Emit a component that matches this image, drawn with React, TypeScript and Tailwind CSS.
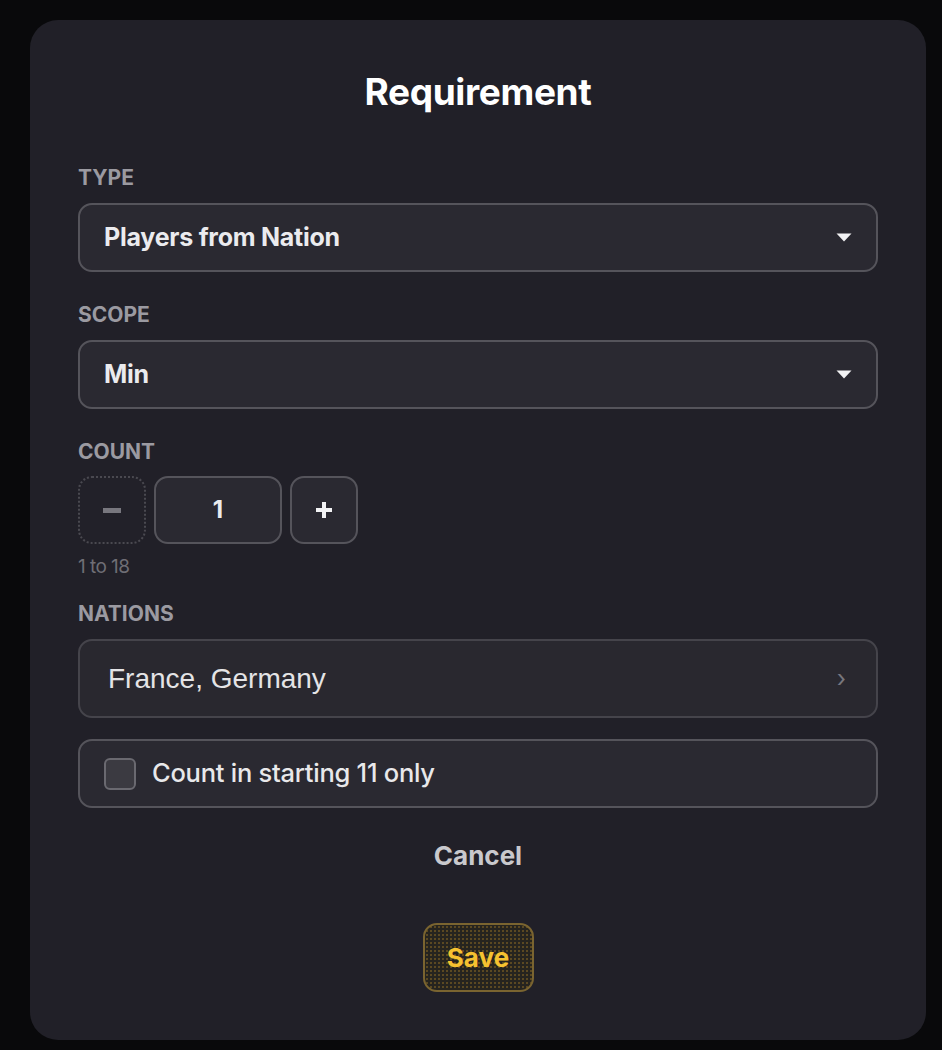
import { useState } from "react";

const font = { fontFamily: "Inter, 'Noto Sans', sans-serif" };

function FieldLabel({ children }: { children: React.ReactNode }) {
  return (
    <div className="text-[21px] font-bold leading-[26px] text-[#9b9aa1]">{children}</div>
  );
}

function Caret() {
  return (
    <svg width="16" height="9" viewBox="0 0 16 9" aria-hidden>
      <path d="M0.5 0.5h15L8 8.5z" fill="#f2f2f4" />
    </svg>
  );
}

function SelectBox({ value }: { value: string }) {
  return (
    <div className="flex h-[69px] items-center justify-between rounded-[14px] border-2 border-[#55545b] bg-[#2a2931] pl-[24px] pr-[24px]">
      <span className="text-[25px] font-bold tracking-[-0.01em] text-[#ebebee]">{value}</span>
      <Caret />
    </div>
  );
}

export default function App() {
  const [count] = useState(1);
  const [startingOnly, setStartingOnly] = useState(false);

  return (
    <div className="min-h-[1050px] bg-[#09090b] px-[30px] pt-[20px] pb-[10px]" style={font}>
      <div className="flex h-[1020px] w-[896px] flex-col rounded-[28px] bg-[#212028] px-[48px]">
        <h1 className="mt-[50px] text-center text-[37px] font-bold leading-[44px] tracking-[-0.01em] text-white">
          Requirement
        </h1>

        <div className="mt-[51px] flex flex-col gap-[12px]">
          <FieldLabel>TYPE</FieldLabel>
          <SelectBox value="Players from Nation" />
        </div>

        <div className="mt-[30px] flex flex-col gap-[12px]">
          <FieldLabel>SCOPE</FieldLabel>
          <SelectBox value="Min" />
        </div>

        <div className="mt-[30px] flex flex-col gap-[11px]">
          <FieldLabel>COUNT</FieldLabel>
          <div className="flex gap-[8px]">
            <button
              type="button"
              disabled
              className="flex size-[68px] items-center justify-center rounded-[14px] border-2 border-dotted border-[#4a4950] bg-[#222129]"
            >
              <span className="h-[5px] w-[18px] bg-[#78777e]" />
            </button>
            <div className="flex h-[68px] w-[128px] items-center justify-center rounded-[14px] border-2 border-[#55545b] bg-[#2a2931] text-[24px] font-bold text-[#ebebee]">
              {count}
            </div>
            <button
              type="button"
              className="flex size-[68px] items-center justify-center rounded-[14px] border-2 border-[#55545b] bg-[#2a2931]"
            >
              <svg width="18" height="18" viewBox="0 0 18 18" aria-hidden>
                <path d="M9 1v16M1 9h16" stroke="#f2f2f4" strokeWidth="4" />
              </svg>
            </button>
          </div>
          <div className="text-[19px] leading-[24px] tracking-[-0.03em] text-[#6f6e75]">1 to 18</div>
        </div>

        <div className="mt-[22px] flex flex-col gap-[12px]">
          <FieldLabel>NATIONS</FieldLabel>
          <div className="flex h-[79px] items-center justify-between rounded-[14px] border-2 border-[#45444b] bg-[#29282f] pl-[28px] pr-[30px]">
            <span
              className="text-[28px] text-[#e4e4e6]"
              style={{ fontFamily: "'Liberation Sans', Arial, sans-serif" }}
            >
              France, Germany
            </span>
            <span className="text-[24px] text-[#77767d]">›</span>
          </div>
        </div>

        <label className="mt-[21px] flex h-[69px] cursor-pointer items-center gap-[16px] rounded-[14px] border-2 border-[#55545b] bg-[#2a2931] px-[24px]">
          <input
            type="checkbox"
            checked={startingOnly}
            onChange={(e) => setStartingOnly(e.target.checked)}
            className="size-[32px] appearance-none rounded-[6px] border-2 border-[#6a6970] bg-[#3b3a41]"
          />
          <span className="text-[25.5px] font-medium tracking-[-0.01em] text-[#e8e8ea]">
            Count in starting 11 only
          </span>
        </label>

        <button
          type="button"
          className="mt-[28px] self-center text-[26px] font-bold text-[#c9c9cd]"
        >
          Cancel
        </button>

        <button
          type="button"
          className="mt-[48px] flex h-[69px] w-[111px] items-center justify-center self-center rounded-[14px] border-2 border-[#7a6430] bg-[#26241f] text-[26px] font-bold text-[#f6c230]"
          style={{
            backgroundImage: "radial-gradient(rgba(200,150,40,0.35) 0.7px, transparent 0.8px)",
            backgroundSize: "4px 4px",
          }}
        >
          Save
        </button>
      </div>
    </div>
  );
}
